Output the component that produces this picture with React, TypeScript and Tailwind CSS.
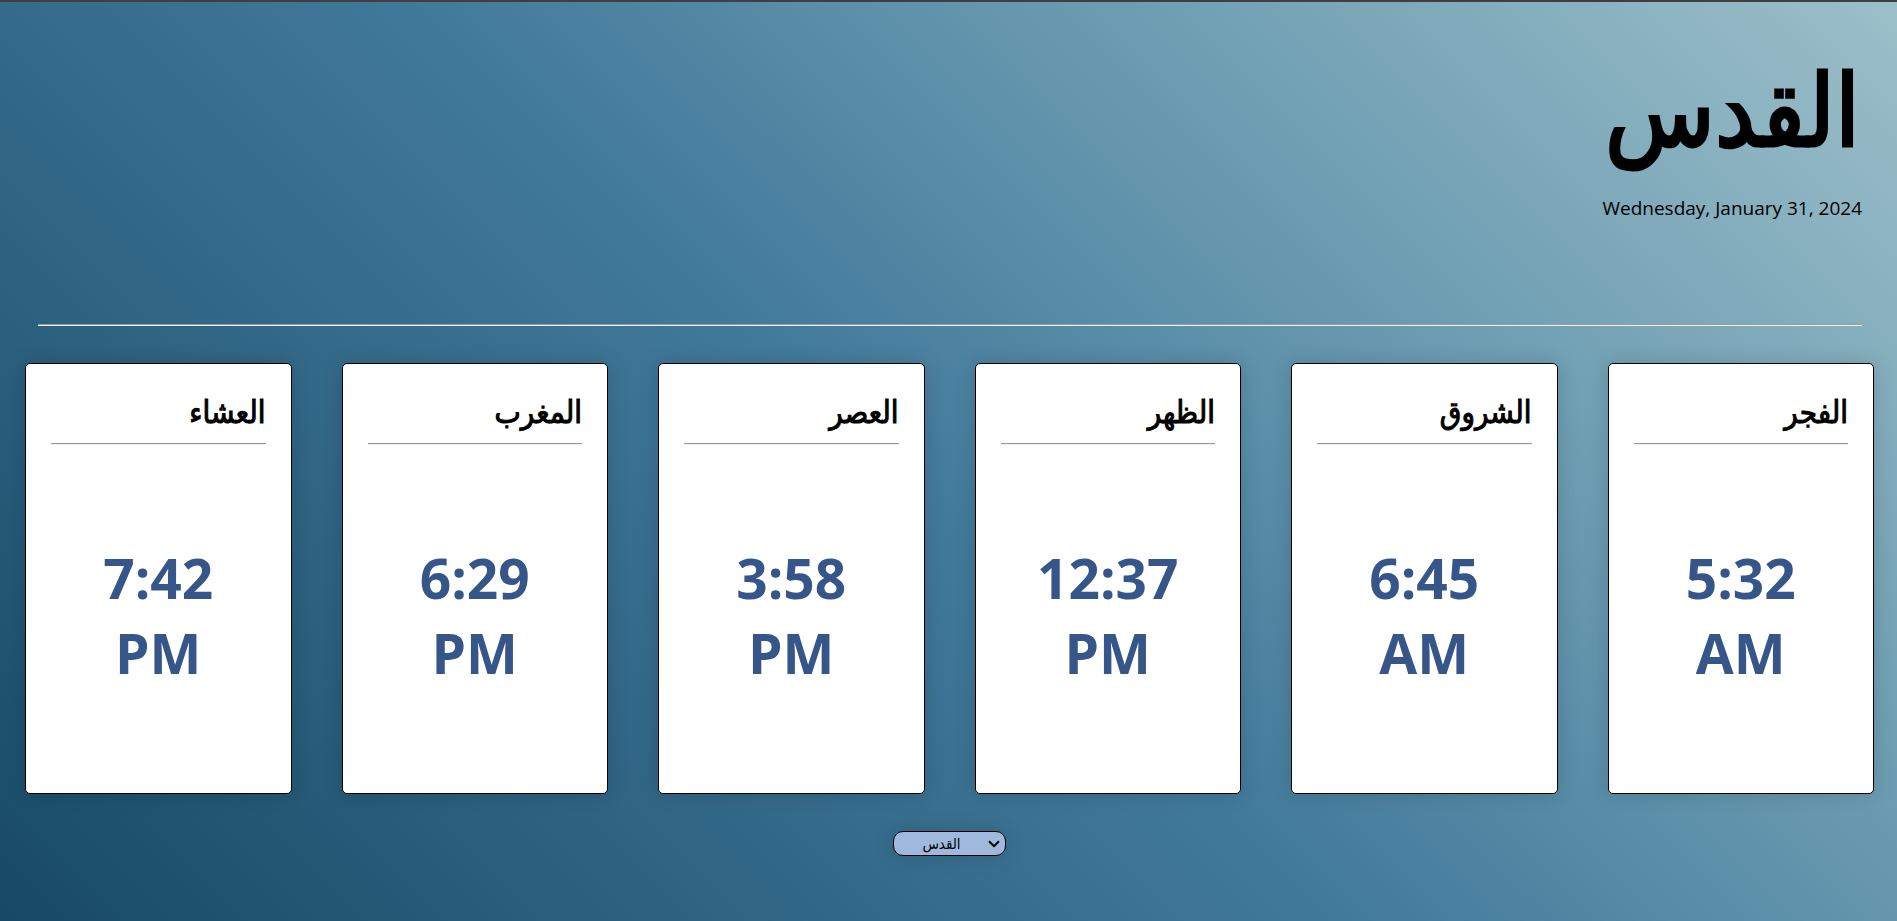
const prayers = [
  { name: "الفجر", time: "5:32", period: "AM" },
  { name: "الشروق", time: "6:45", period: "AM" },
  { name: "الظهر", time: "12:37", period: "PM" },
  { name: "العصر", time: "3:58", period: "PM" },
  { name: "المغرب", time: "6:29", period: "PM" },
  { name: "العشاء", time: "7:42", period: "PM" },
];

export default function App() {
  return (
    <main
      dir="rtl"
      className="flex min-h-screen flex-col border-t-2 border-[#413d44] bg-[linear-gradient(45deg,#184a66_0%,#427a9b_48%,#6b9bb1_71%,#9cbfc9_100%)] pl-[2px] font-['Open_Sans','DejaVu_Sans_Condensed','DejaVu_Sans',sans-serif] text-black"
    >
      <header className="flex flex-col items-start px-[35px] pt-[38px]">
        <h1 className="px-[2px] text-[100px] leading-[134px] font-normal [-webkit-text-stroke:3px_black]">القدس</h1>
        <p dir="ltr" className="pt-5 text-[19px] leading-[28px]">
          Wednesday, January 31, 2024
        </p>
      </header>
      <hr className="mr-[35px] ml-9 mt-[102px] h-[2px] border-t border-b border-t-[#9a9a9a] border-b-[#eeeeee]" />
      <section className="mt-[37px] mr-[23px] ml-[23px] grid grid-cols-6 gap-[50px]">
        {prayers.map((prayer) => (
          <article
            key={prayer.name}
            className="flex h-[431px] flex-col rounded-[5px] border border-black bg-white px-[25px] pt-6 pb-2 shadow-[0_0_20px_rgba(0,0,0,0.15)]"
          >
            <h2 className="text-[31px] leading-[46px] font-normal [-webkit-text-stroke:1px_black]">{prayer.name}</h2>
            <hr className="mt-[9px] h-[2px] border-t border-b border-t-[#9a9a9a] border-b-[#eeeeee]" />
            <p className="flex flex-1 flex-col items-center justify-center text-[55px] leading-[75px] font-bold text-[#365588]">
              <span>{prayer.time}</span>
              <span>{prayer.period}</span>
            </p>
          </article>
        ))}
      </section>
      <div className="relative mt-[37px] mb-16 w-[113px] self-center">
        <select
          aria-label="المدينة"
          dir="ltr"
          className="block h-[25px] w-full appearance-none rounded-[10px] border border-black bg-[#a0b8dc] pr-5 pl-1 text-center font-['Liberation_Sans','DejaVu_Sans_Condensed','DejaVu_Sans',sans-serif] text-[15px] leading-[20px] shadow-[0_0_20px_rgba(0,0,0,0.15)]"
        >
          <option>القدس</option>
        </select>
        <svg
          viewBox="0 0 12 8"
          className="pointer-events-none absolute top-[9px] right-[6px] h-2 w-3"
          fill="none"
          stroke="black"
          strokeWidth="2"
          aria-hidden="true"
        >
          <path d="M1 1.2 6 6.2 11 1.2" />
        </svg>
      </div>
    </main>
  );
}
